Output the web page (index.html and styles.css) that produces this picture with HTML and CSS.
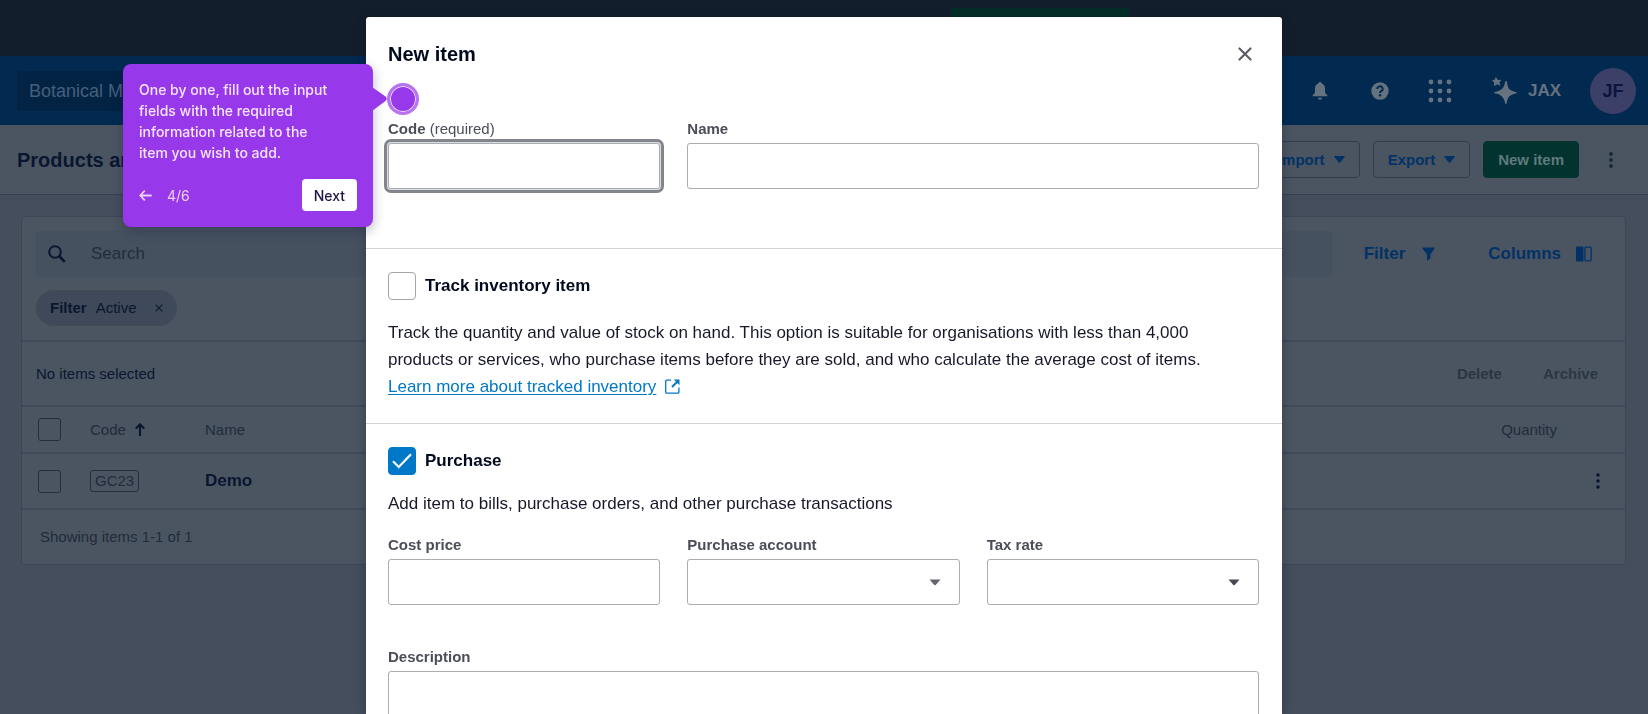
FILE: index.html
```html
<!DOCTYPE html>
<html lang="en">
<head>
<meta charset="utf-8">
<title>Products and services</title>
<link rel="stylesheet" href="styles.css">
</head>
<body>
<div class="page">
  <div class="banner"><div class="banner-action"></div></div>

  <header class="nav">
    <button class="org" type="button">Botanical Ma</button>
    <div class="nav-tools">
      <button class="plain nav-icon" type="button" aria-label="Notifications">
        <svg width="16" height="20" viewBox="0 0 16 20" fill="currentColor"><path d="M8 1C6.900 1 6.400 1.700 6.300 2.500 4.200 3.200 3 5.100 3 7.500V11.500L.6 14.500V15.300H15.400V14.500L13 11.500V7.500C13 5.100 11.800 3.200 9.700 2.500 9.600 1.700 9.100 1 8 1Z"/><path d="M6 16.700H10A2 2 0 0 1 6 16.700Z"/></svg>
      </button>
      <button class="plain nav-icon" type="button" aria-label="Help">
        <svg width="18" height="18" viewBox="0 0 18 18"><circle cx="9" cy="9" r="8.700" fill="currentColor"/><path d="M6.300 7A2.700 2.600 0 1 1 10.200 9.200C9.300 9.700 9 10 9 11" fill="none" stroke="#022a50" stroke-width="1.900"/><circle cx="9" cy="13.300" r="1.200" fill="#022a50"/></svg>
      </button>
      <button class="plain nav-icon" type="button" aria-label="Apps">
        <svg width="24" height="24" viewBox="0 0 24 24" fill="currentColor"><circle cx="3" cy="3" r="2.400"/><circle cx="12" cy="3" r="2.400"/><circle cx="21" cy="3" r="2.400"/><circle cx="3" cy="12" r="2.400"/><circle cx="12" cy="12" r="2.400"/><circle cx="21" cy="12" r="2.400"/><circle cx="3" cy="21" r="2.400"/><circle cx="12" cy="21" r="2.400"/><circle cx="21" cy="21" r="2.400"/></svg>
      </button>
      <button class="plain jax" type="button">
        <svg width="26" height="28" viewBox="0 0 26 28" fill="currentColor"><path d="M14 4Q14.800 4 15 5C15.900 11.500 17 13.500 24.500 15.200Q25.300 15.700 24.500 16.300C17.500 18 15.900 19.500 14.600 26.500Q14 27.500 13.300 26.500C11.500 19.500 9 17.500 2.500 16.300Q1.500 15.600 2.500 15C9 13.500 12 12 13 5Q13.200 4 14 4Z"/><path d="M3.500.3Q4 0 4.500.8L5.800 3 8.500 2.700Q9.300 3 8.900 3.800L7.300 5.500 8.300 7.700Q8.200 8.600 7.200 8.300L5 7.300 2.800 8.700Q1.800 8.800 1.900 7.800L2.300 5.500.5 4.200Q0 3.300.9 3L3 2.600Z"/></svg>
        JAX
      </button>
      <button class="plain avatar" type="button">JF</button>
    </div>
  </header>

  <div class="page-head">
    <h1>Products and</h1>
    <div class="actions">
      <button class="btn" type="button">Import <svg width="11" height="7" viewBox="0 0 11 7" fill="currentColor"><path d="M.8 0H10.200Q11.300 0 10.600 1L6.200 6.500Q5.500 7 4.800 6.500L.4 1Q-.3 0 .8 0Z"/></svg></button>
      <button class="btn" type="button">Export <svg width="11" height="7" viewBox="0 0 11 7" fill="currentColor"><path d="M.8 0H10.200Q11.300 0 10.600 1L6.200 6.500Q5.500 7 4.800 6.500L.4 1Q-.3 0 .8 0Z"/></svg></button>
      <button class="btn btn-primary" type="button">New item</button>
      <button class="plain more" type="button" aria-label="More actions">
        <svg width="4" height="16" viewBox="0 0 4 16" fill="currentColor"><circle cx="2" cy="2" r="1.900"/><circle cx="2" cy="8" r="1.900"/><circle cx="2" cy="14" r="1.900"/></svg>
      </button>
    </div>
  </div>

  <main class="card">
    <div class="toolbar">
      <label class="search">
        <svg width="18" height="18" viewBox="0 0 18 18" fill="none" stroke="currentColor" stroke-width="2"><circle cx="7" cy="7" r="5.800"/><path d="M11.500 11.500 16.800 16.800" stroke-width="2.600"/></svg>
        <input type="search" placeholder="Search" aria-label="Search">
      </label>
      <button class="plain tool" type="button">Filter
        <svg width="13" height="14" viewBox="0 0 13 14" fill="currentColor"><path d="M.8.5H12.200Q13.200.6 12.600 1.600L8.500 7.200V11.500L5 13.800V7.200L.4 1.600Q-.2.600.8.500Z"/></svg>
      </button>
      <button class="plain tool tool-wide" type="button">Columns
        <svg width="16" height="16" viewBox="0 0 16 16"><rect x="0" y="0.500" width="7.500" height="15" rx="1" fill="currentColor"/><rect x="8.900" y="1.200" width="6.300" height="13.600" rx="1" fill="none" stroke="currentColor" stroke-width="1.300"/></svg>
      </button>
    </div>
    <div class="chips">
      <span class="chip"><b>Filter</b> Active
        <button class="plain" type="button" aria-label="Remove filter"><svg width="8" height="8" viewBox="0 0 9 9" stroke="currentColor" stroke-width="1.200"><path d="M.7.700 8.300 8.300M8.300.700.7 8.300"/></svg></button>
      </span>
    </div>
    <div class="selection">
      <span>No items selected</span>
      <span class="selection-actions">
        <button class="plain" type="button">Delete</button>
        <button class="plain" type="button">Archive</button>
      </span>
    </div>
    <table>
      <thead>
        <tr>
          <th class="c-check"><input class="row-check" type="checkbox" aria-label="Select all"></th>
          <th class="c-code"><span class="sort">Code <svg width="10" height="13" viewBox="0 0 10 13" fill="none" stroke="#0a1630" stroke-width="2.100"><path d="M5 13V1.500M.8 5.600 5 1.400 9.200 5.600"/></svg></span></th>
          <th>Name</th>
          <th class="c-qty">Quantity</th>
          <th class="c-more"></th>
        </tr>
      </thead>
      <tbody>
        <tr>
          <td class="c-check"><input class="row-check" type="checkbox" aria-label="Select Demo"></td>
          <td class="c-code"><span class="tag">GC23</span></td>
          <td class="name">Demo</td>
          <td class="c-qty"></td>
          <td class="c-more"><button class="plain" type="button" aria-label="Row actions"><svg width="4" height="16" viewBox="0 0 4 16" fill="currentColor"><circle cx="2" cy="2" r="1.800"/><circle cx="2" cy="8" r="1.800"/><circle cx="2" cy="14" r="1.800"/></svg></button></td>
        </tr>
      </tbody>
    </table>
    <div class="card-foot">Showing items 1-1 of 1</div>
  </main>
</div>

<div class="layer">
  <form class="modal" role="dialog" aria-labelledby="modal-title">
    <section class="block block-first">
      <div class="modal-head">
        <h2 id="modal-title">New item</h2>
        <button class="plain close" type="button" aria-label="Close"><svg width="14" height="14" viewBox="0 0 14 14" stroke="currentColor" stroke-width="2.200" stroke-linecap="round"><path d="M1.500 1.500 12.500 12.500M12.500 1.500 1.500 12.500"/></svg></button>
      </div>
      <div class="fields">
        <div class="field">
          <label for="code">Code <span>(required)</span></label>
          <input class="box box-focus" id="code" type="text">
        </div>
        <div class="field span-two">
          <label for="name">Name</label>
          <input class="box" id="name" type="text">
        </div>
      </div>
    </section>

    <section class="block">
      <label class="check"><span class="tick"><input type="checkbox"></span>Track inventory item</label>
      <p class="track-text">Track the quantity and value of stock on hand. This option is suitable for organisations with less than 4,000 products or services, who purchase items before they are sold, and who calculate the average cost of items.</p>
      <p class="track-link"><a href="#tracked">Learn more about tracked inventory</a>
        <svg width="15" height="15" viewBox="0 0 15 15" fill="none" stroke="currentColor" stroke-width="1.300"><path d="M6 1.200H1.500Q.7 1.200.7 2V13.300Q.7 14.200 1.500 14.200H13Q13.900 14.200 13.900 13.300V8.500"/><path d="M7 8 12.500 2.500" stroke-width="2"/><path d="M8.800.500H14.500V6.200Z" fill="currentColor" stroke="none"/></svg></p>
    </section>

    <section class="block block-last">
      <label class="check"><span class="tick"><input type="checkbox" checked><svg width="20" height="16" viewBox="0 0 20 16" fill="none" stroke="#fff" stroke-width="2.200"><path d="M1 8.300 6.800 14 19 1.200"/></svg></span>Purchase</label>
      <p class="purchase-text">Add item to bills, purchase orders, and other purchase transactions</p>
      <div class="fields">
        <div class="field">
          <label for="cost">Cost price</label>
          <input class="box" id="cost" type="text">
        </div>
        <div class="field">
          <label for="account">Purchase account</label>
          <div class="select"><select class="box" id="account"><option></option></select><svg width="12" height="7" viewBox="0 0 12 7"><path d="M.5.500H11.500L6.700 5.900Q6 6.500 5.300 5.900Z" fill="#62656e"/></svg></div>
        </div>
        <div class="field">
          <label for="tax">Tax rate</label>
          <div class="select"><select class="box" id="tax"><option></option></select><svg width="12" height="7" viewBox="0 0 12 7"><path d="M.5.500H11.500L6.700 5.900Q6 6.500 5.300 5.900Z" fill="#454850"/></svg></div>
        </div>
        <div class="field span-all">
          <label for="description">Description</label>
          <textarea class="box" id="description"></textarea>
        </div>
      </div>
    </section>
  </form>

  <aside class="tip">
    <p>One by one, fill out the input fields with the required information related to the item you wish to add.</p>
    <div class="tip-foot">
      <button class="plain" type="button" aria-label="Back"><svg width="13" height="11" viewBox="0 0 13 11" fill="none" stroke="currentColor" stroke-width="1.800" stroke-linecap="round" stroke-linejoin="round"><path d="M12 5.500H1.500M5.300 1.200 1.200 5.500 5.300 9.800"/></svg></button>
      <span>4/6</span>
      <button class="next" type="button">Next</button>
    </div>
    <svg class="tip-arrow" width="16" height="24" viewBox="0 0 16 24"><path d="M0 0 13.500 9.500Q16 12 13.500 14L0 24Z" fill="#9738ea"/></svg>
  </aside>
  <span class="beacon"></span>
</div>
</body>
</html>
```
FILE: styles.css
```css
* { box-sizing: border-box; }

body {
  margin: 0;
  height: 100vh;
  overflow: hidden;
  background: #444e5d;
  color: #0a1630;
  font-family: "Liberation Sans", Arial, sans-serif;
  font-size: 15px;
  line-height: 20px;
}

h1, h2, p { margin: 0; }

button, input, select, textarea { font: inherit; color: inherit; }

.plain {
  display: flex;
  align-items: center;
  padding: 0;
  border: 0;
  background: none;
}

svg { display: block; flex: none; }

/* Page behind the dialog */

.banner {
  display: flex;
  height: 56px;
  padding-top: 8px;
  background: #131e2d;
}

.banner-action {
  width: 178px;
  height: 40px;
  margin-left: 951px;
  border-radius: 3px;
  background: #032e28;
}

.nav {
  display: flex;
  align-items: center;
  justify-content: space-between;
  height: 69px;
  padding: 0 12px 0 17px;
  background: #022a50;
  color: #66727f;
}

.org {
  width: 200px;
  height: 40px;
  padding: 0 12px;
  border: 0;
  border-radius: 3px;
  background: #022344;
  font-size: 18px;
  text-align: left;
  color: #455f7c;
}

.nav-tools { display: flex; align-items: center; }

.nav-icon { justify-content: center; width: 60px; height: 40px; }

.jax {
  gap: 10px;
  margin: 0 29px 0 22px;
  font-size: 17px;
  font-weight: bold;
}

.avatar {
  justify-content: center;
  width: 46px;
  height: 46px;
  border-radius: 50%;
  background: #3c3f68;
  color: #0b1440;
  font-size: 18px;
  font-weight: bold;
}

.page-head {
  display: flex;
  align-items: center;
  justify-content: space-between;
  height: 70px;
  padding: 0 35px 0 17px;
  border-bottom: 1px solid #36404f;
  background: #4b5562;
}

h1 { font-size: 20px; line-height: 24px; }

.actions { display: flex; align-items: center; gap: 13px; }

.btn {
  display: flex;
  align-items: center;
  gap: 9px;
  height: 37px;
  padding: 0 14px;
  border: 1px solid #323d4c;
  border-radius: 4px;
  background: none;
  color: #023265;
  font-weight: bold;
}

.btn-primary {
  border-color: #02332f;
  background: #02332f;
  color: #5f7a7c;
}

.more { margin-left: 17px; color: #1c2738; }

.card {
  margin: 21px 22px 0 21px;
  border: 1px solid #3c4655;
  border-radius: 4px;
  background: #4b5562;
}

.toolbar {
  display: flex;
  align-items: center;
  padding: 14px 33px 0 14px;
}

.search {
  display: flex;
  flex: 1;
  align-items: center;
  gap: 25px;
  height: 46px;
  padding: 0 12px;
  border-radius: 3px;
  background: #465160;
}

.search input {
  flex: 1;
  min-width: 0;
  padding: 0;
  border: 0;
  outline: 0;
  background: none;
  font-size: 17px;
}

.search input::placeholder { color: #222c3c; opacity: 1; }

.tool {
  gap: 17px;
  margin-left: 32px;
  color: #023265;
  font-size: 17px;
  font-weight: bold;
}

.tool-wide { gap: 15px; margin-left: 53px; }

.chips { padding: 13px 14px 14px; }

.chip {
  display: inline-flex;
  align-items: center;
  gap: 9px;
  height: 36px;
  padding: 0 14px;
  border-radius: 18px;
  background: #3f495a;
}

.chip button { margin-left: 9px; }

.selection {
  display: flex;
  align-items: center;
  justify-content: space-between;
  height: 65px;
  padding: 0 27px 0 14px;
  border-top: 2px solid #404a59;
}

.selection-actions { display: flex; gap: 41px; }

.selection-actions button { color: #2b3544; font-weight: bold; }

table { width: 100%; border-collapse: collapse; }

th, td { padding: 0; border-top: 2px solid #404a59; text-align: left; }

th { height: 47px; color: #212b3b; font-weight: normal; }

td { height: 55px; }

.c-check { width: 68px; padding-left: 16px; }

.c-code { width: 115px; }

.c-qty { width: 110px; padding-right: 39px; text-align: right; }

.c-more { width: 29px; }

.row-check {
  display: block;
  width: 23px;
  height: 23px;
  margin: 0;
  appearance: none;
  border: 1px solid #232e3e;
  border-radius: 3px;
}

.sort { display: flex; align-items: center; gap: 9px; }

.tag {
  display: inline-block;
  padding: 0 4px;
  border: 1px solid #232e3e;
  border-radius: 3px;
  color: #212b3b;
}

.name { font-size: 17px; font-weight: bold; }

.card-foot {
  display: flex;
  align-items: center;
  height: 56px;
  padding: 0 18px;
  border-top: 2px solid #404a59;
  color: #212b3b;
}

/* Dialog */

.layer {
  position: fixed;
  top: 17px;
  bottom: 0;
  left: 0;
  right: 0;
  max-width: 916px;
  margin: 0 auto;
}

.modal {
  height: 100%;
  overflow: hidden;
  border-radius: 3px 3px 0 0;
  background: #fff;
  box-shadow: 0 2px 12px rgba(10, 18, 40, 0.3);
}

.block { padding: 23px 23px 23px 22px; border-bottom: 1px solid #d3d5d8; }

.block-first { padding-bottom: 59px; }

.block-last { border-bottom: 0; }

.modal-head {
  display: flex;
  align-items: center;
  justify-content: space-between;
  margin-bottom: 51px;
  padding-right: 7px;
}

h2 { font-size: 20px; line-height: 28px; color: #000a1e; }

.close { color: #5c5f66; }

.fields {
  display: grid;
  grid-template-columns: repeat(3, 1fr);
  gap: 42px 27px;
}

.span-two { grid-column: span 2; }

.span-all { grid-column: 1 / -1; }

.field { display: flex; flex-direction: column; gap: 4px; }

.field label { color: #4b4e59; font-weight: bold; }

.field label span { font-weight: normal; }

.box {
  width: 100%;
  height: 46px;
  padding: 0 12px;
  border: 1px solid #a9acb1;
  border-radius: 3px;
  background: #fff;
}

textarea.box { height: 92px; resize: none; }

.box-focus { outline: 0; box-shadow: 0 0 0 1px #dcdde2, 0 0 0 4px #83858d; }

.select { display: grid; align-items: center; }

.select > * { grid-area: 1 / 1; }

.select select { appearance: none; }

.select svg { justify-self: end; margin-right: 19px; pointer-events: none; }

.check {
  display: flex;
  align-items: center;
  gap: 9px;
  color: #000a1e;
  font-size: 17px;
  font-weight: bold;
}

.tick { display: grid; place-items: center; }

.tick > * { grid-area: 1 / 1; }

.tick input {
  width: 28px;
  height: 28px;
  margin: 0;
  appearance: none;
  border: 1px solid #a3a6ab;
  border-radius: 4px;
}

.tick input:checked { border-color: #0078c8; background: #0078c8; }

.track-text, .track-link, .purchase-text { font-size: 17px; line-height: 27px; color: #17192b; }

.track-text { margin-top: 19px; padding-right: 24px; }

.track-link { display: flex; align-items: center; gap: 9px; color: #0078c8; }

.track-link a { color: inherit; text-underline-offset: 2px; }

.purchase-text { margin: 15px 0 18px; }

/* Guided tour */

.tip {
  position: absolute;
  top: 47px;
  left: -243px;
  width: 250px;
  padding: 15px 16px 16px;
  border-radius: 8px;
  background: #9738ea;
  box-shadow: 0 4px 12px rgba(20, 20, 60, 0.3);
  color: #f6e6ff;
  font-family: Inter, sans-serif;
  font-size: 14px;
  font-weight: 500;
  line-height: 21px;
}

.tip p { padding-right: 24px; }

.tip-foot { display: flex; align-items: center; gap: 15px; margin-top: 16px; color: #ead2fc; font-weight: normal; }

.next {
  height: 32px;
  margin-left: auto;
  padding: 0 12px;
  border: 0;
  border-radius: 4px;
  background: #fff;
  color: #1c1348;
  font-weight: 500;
}

.tip-arrow { position: absolute; top: 23px; left: 249px; }

.beacon {
  position: absolute;
  top: 66px;
  left: 21px;
  width: 32px;
  height: 32px;
  border: 3px solid #b873f2;
  border-radius: 50%;
  background: #9738ea;
  box-shadow: inset 0 0 0 1px #f3e4ff;
}
```
